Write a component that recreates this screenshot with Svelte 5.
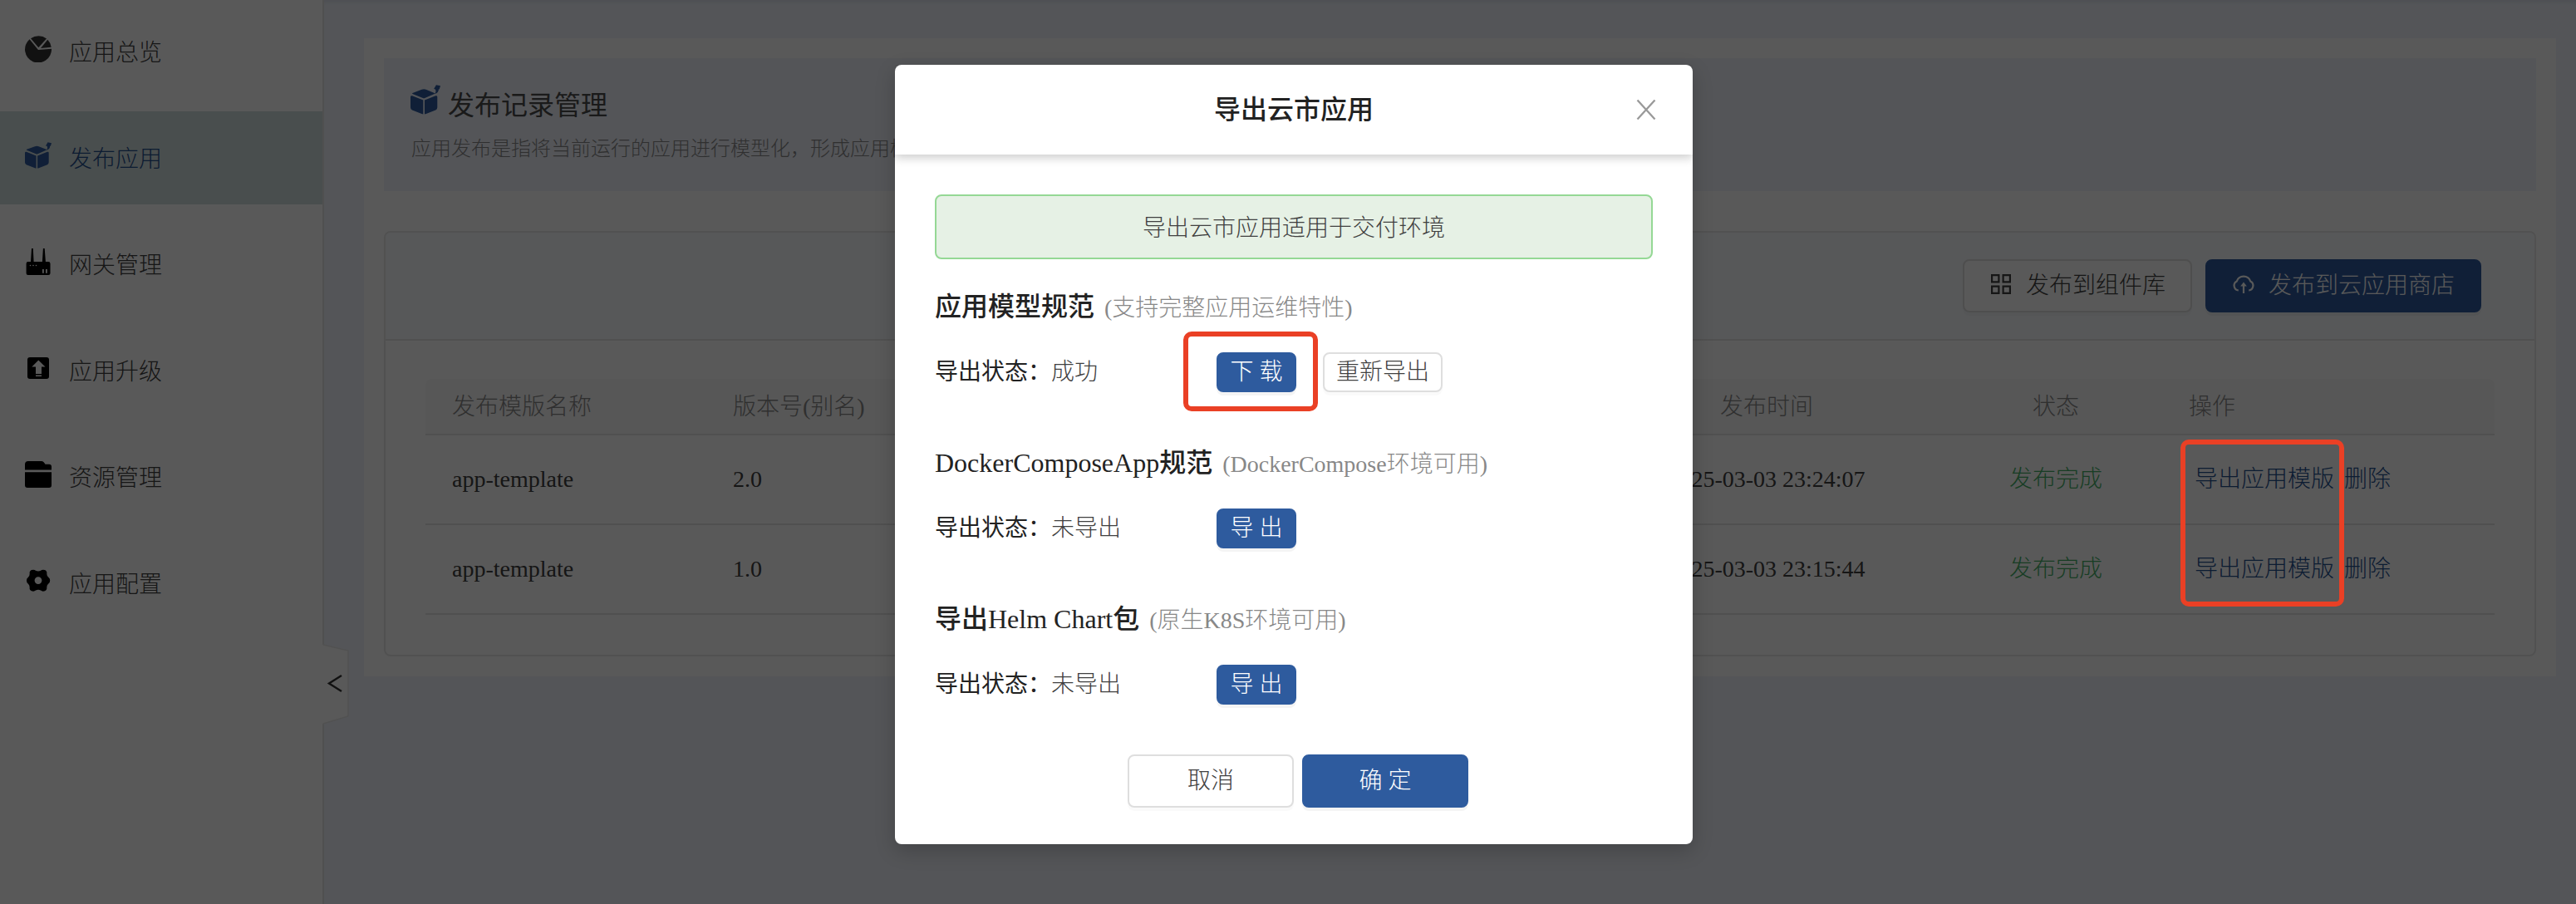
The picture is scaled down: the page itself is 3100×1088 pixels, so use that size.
<script>
  const menu = [
    { label: '应用总览', icon: 'pie' },
    { label: '发布应用', icon: 'box', active: true },
    { label: '网关管理', icon: 'router' },
    { label: '应用升级', icon: 'upgrade' },
    { label: '资源管理', icon: 'folder' },
    { label: '应用配置', icon: 'gear' },
  ];
  const rows = [
    { name: 'app-template', version: '2.0', time: '2025-03-03 23:24:07' },
    { name: 'app-template', version: '1.0', time: '2025-03-03 23:15:44' },
  ];
  const sections = [
    { title: '应用模型规范', note: '(支持完整应用运维特性)', status: '成功', primary: '下 载', again: '重新导出' },
    { title: 'DockerComposeApp规范', note: '(DockerCompose环境可用)', status: '未导出', primary: '导 出' },
    { title: '导出Helm Chart包', note: '(原生K8S环境可用)', status: '未导出', primary: '导 出' },
  ];
</script>

{#snippet box()}
  <svg class="icon" viewBox="0 0 32 32" fill="currentColor">
    <path d="M2.200 8.800 12 5.200q2.300-.9 4.600 0l9 3.600q.6.500 0 .9L15.400 14.200q-1.100.4-2.200 0L2.200 9.800q-.7-.5 0-1z" />
    <path d="M1.800 11.800 13.600 16.400V31.600q-.7 0-1.600-.4L1.800 27.200Q0 26.200 0 24.200V13q0-1.700 1.800-1.200z" />
    <path d="M26.900 11.800 15.100 16.400V31.600q.7 0 1.600-.4L26.900 27.200q1.800-1 1.800-3V13q0-1.700-1.800-1.200z" />
    <path d="M27.500.2 32 1.200 30.800 5 30.200 4.500q0 4.200-4.500 5.400Q28 7 26.500 4.800L25 4.400z" />
  </svg>
{/snippet}

<div class="app">
  <aside class="sidebar">
    {#each menu as item}
      <div class="item" class:active={item.active}>
        <span class="item-icon">
          {#if item.icon === 'pie'}
            <svg class="icon" viewBox="0 0 32 32" fill="#333">
              <path d="M5.600 4.300 16 17 32 15.700A16 16 0 1 1 5.600 4.300z" />
              <path d="M7 3.200A16 16 0 0 1 26 3.400L16.300 14.200z" />
              <path d="M27.300 4.800A16 16 0 0 1 31.700 13.800L19 15z" />
            </svg>
          {:else if item.icon === 'box'}
            {@render box()}
          {:else if item.icon === 'router'}
            <svg class="icon" viewBox="0 0 32 32">
              <path d="M8 0h1.800l.8 16H20.900L21.900 0h1.800l1.200 16h3.300q2.300 0 2.300 2.200V30q0 2-2.300 2H3.800q-2.200 0-2.200-2V18.200Q1.600 16 3.800 16H7z" />
              <g fill="#fff"><circle cx="6.500" cy="20.500" r=".8" /><circle cx="10" cy="20.500" r=".8" /><circle cx="13.500" cy="20.500" r=".8" /><path d="M21 25h1.800v4.800H21zM25 25h1.800v4.800H25z" /></g>
            </svg>
          {:else if item.icon === 'upgrade'}
            <svg class="icon" viewBox="0 0 32 32">
              <rect x="3" y="3" width="26" height="26" rx="3" />
              <path d="M16.300 6.500 24.500 14.500H20V23h-7v-8.500H8.300zM13 24.500h7v1.500h-7z" fill="#fff" />
            </svg>
          {:else if item.icon === 'folder'}
            <svg class="icon" viewBox="0 0 32 32">
              <path d="M0 10.500V4Q0 0 4 0H20q2.500 0 4.500 3.800H29q3 0 3 3v3.700zM0 13.200H32V29q0 3-3 3H3q-3 0-3-3z" />
            </svg>
          {:else}
            <svg class="icon" viewBox="0 0 32 32">
              <path fill-rule="evenodd" d="M8 3q3-1 5 .7 3 1.600 6 0 2-1.700 5-.7 3 1.500 2.300 4.500 0 3 2.200 4.500 1.800 1 1.700 3.500.1 2.500-1.700 3.700-2.200 1.500-2.200 4.600.5 3-2.300 4.500-3 1-5-.7-3-1.600-6 0-2 1.700-5 .7-3-1.500-2.300-4.500 0-3-2.200-4.600Q1.900 18 2 15.500 1.900 13 3.700 12 5.800 10.500 5.700 7.500 5 4.500 8 3zM16 11.200a4.400 4.400 0 1 0 0 8.800 4.400 4.400 0 0 0 0-8.800z" />
            </svg>
          {/if}
        </span>
        <span class="item-label">{item.label}</span>
      </div>
    {/each}
    <svg class="handle" viewBox="0 0 34 98">
      <path d="M0 1 31 8V87L0 96z" fill="#fff" />
      <path d="M1 1 31 8V87L1 96" fill="none" stroke="#e8e8e8" stroke-width="1.500" />
      <path d="M23 38 8 47.500 23 57" fill="none" stroke="#333" stroke-width="2.400" />
    </svg>
  </aside>

  <main class="main">
    <div class="content">
      <header class="banner">
        <div class="banner-title"><span class="banner-icon">{@render box()}</span><h1>发布记录管理</h1></div>
        <p>应用发布是指将当前运行的应用进行模型化，形成应用模版</p>
      </header>

      <section class="card">
        <div class="toolbar">
          <button class="btn large">
            <svg class="btn-icon" viewBox="0 0 28 28" fill="none" stroke="currentColor" stroke-width="2.200">
              <path d="M3.100 3.100h8.300v8.300H3.100zM16.600 3.100h8.300v8.300h-8.300zM3.100 16.600h8.300v8.300H3.100zM16.600 16.600h8.300v8.300h-8.300z" />
            </svg>
            <span>发布到组件库</span>
          </button>
          <button class="btn large primary">
            <svg class="btn-icon" viewBox="0 0 28 28" fill="none" stroke="currentColor" stroke-width="2.200">
              <path d="M7.800 21.500A5.900 5.900 0 0 1 5.800 10.400a8.700 8.700 0 0 1 16.400 0 5.900 5.900 0 0 1-2 11.100M14 25V14" />
              <path d="M14 11.500 17.800 16.500H10.200z" fill="currentColor" stroke="none" />
            </svg>
            <span>发布到云应用商店</span>
          </button>
        </div>
        <div class="table">
          <div class="row head">
            <span>发布模版名称</span><span>版本号(别名)</span><span class="center">发布时间</span><span class="center">状态</span><span>操作</span>
          </div>
          {#each rows as row}
            <div class="row">
              <span>{row.name}</span><span>{row.version}</span><span class="center">{row.time}</span>
              <span class="center done">发布完成</span>
              <span class="links"><a href="#export">导出应用模版</a><a href="#delete">删除</a></span>
            </div>
          {/each}
        </div>
      </section>
    </div>
  </main>
</div>

<div class="mask">
  <div class="modal">
    <div class="modal-head">
      <h2>导出云市应用</h2>
      <svg class="close" viewBox="0 0 24 26" fill="none" stroke="#999" stroke-width="2.300"><path d="M1.500 1.500 22.500 24.500M22.500 1.500 1.500 24.500" /></svg>
    </div>
    <div class="modal-body">
      <div class="alert">导出云市应用适用于交付环境</div>
      {#each sections as s}
        <div class="section">
          <div class="section-title"><strong>{s.title}</strong><span>{s.note}</span></div>
          <div class="section-row">
            <div class="status"><span class="label">导出状态：</span>{s.status}</div>
            <div class="actions">
              <button class="btn small primary">{s.primary}</button>
              {#if s.again}<button class="btn small">{s.again}</button>{/if}
            </div>
          </div>
        </div>
      {/each}
      <div class="footer">
        <button class="btn wide">取消</button>
        <button class="btn wide primary">确 定</button>
      </div>
    </div>
  </div>
</div>

<div class="mark mark-download"></div>
<div class="mark mark-links"></div>

<style>
  :global(body) { margin: 0; overflow: hidden; }
  .app, .mask, .app *, .mask *, .mark { box-sizing: border-box; }
  .app, .mask { font-family: 'Liberation Serif', 'Noto Sans CJK SC', serif; font-size: 28px; font-weight: 300; line-height: 42px; color: #404040; }
  .app { display: flex; width: 3100px; height: 1088px; background: #f0f4fd; overflow: hidden; }
  .icon { display: block; width: 100%; height: 100%; }
  .sidebar { position: relative; flex: none; width: 390px; border-right: 2px solid #e6e6e6; background: #fff; padding-top: 6px; display: flex; flex-direction: column; gap: 16px; }
  .item { height: 112px; display: flex; align-items: center; gap: 21px; padding-left: 30px; white-space: nowrap; }
  .item.active { background: #d2dede; color: #24508f; }
  .item-label { padding-top: 4px; }
  .item-icon { width: 32px; height: 32px; margin-bottom: 6px; color: #2e5b9e; }
  .handle { position: absolute; left: 388px; top: 775px; width: 34px; height: 98px; }
  .main { flex: 1; padding: 46px 24px 0 48px; box-shadow: inset 0 5px 4px -2px rgba(0, 21, 41, .07); }
  .content { height: 768px; padding: 24px; background: #fff; }
  .banner { height: 160px; padding: 32px; background: #f0f4fd; }
  .banner-title { display: flex; align-items: center; gap: 9px; height: 48px; color: #2e5b9e; }
  .banner-icon { width: 36px; height: 36px; margin-bottom: 12px; }
  h1, h2, p { margin: 0; }
  h1 { padding-top: 2px; font-size: 32px; line-height: 48px; font-weight: 400; color: #4a4a4a; }
  .banner p { margin-top: 11px; padding-left: 1px; font-size: 24px; line-height: 36px; color: #888; white-space: nowrap; }
  .card { margin-top: 48px; height: 512px; border: 2px solid #e8e8e8; border-radius: 8px; overflow: hidden; }
  .toolbar { height: 130px; padding: 0 64px 0 0; display: flex; justify-content: flex-end; align-items: center; gap: 16px; background: #f8fbff; border-bottom: 2px solid #e4e4e4; }
  .btn { display: flex; align-items: center; justify-content: center; padding: 0; border: 2px solid #dedede; border-radius: 8px; background: #fff; color: #404040; font: inherit; white-space: nowrap; box-shadow: 0 4px 0 rgba(0, 0, 0, .018); }
  .btn.primary { background: #2e5b9e; border-color: #2e5b9e; color: #fff; box-shadow: 0 4px 0 rgba(0, 0, 0, .045); }
  .large { height: 64px; padding: 0 30px; gap: 16px; }
  .btn-icon { width: 28px; height: 28px; margin-bottom: 4px; }
  .table { margin: 46px 48px 0; }
  .row { display: grid; grid-template-columns: 338px 1026px 436px 290px 1fr; height: 108px; align-items: center; border-bottom: 2px solid #e6e6e6; padding-left: 32px; white-space: nowrap; }
  .head { height: 68px; background: #f8f8f8; color: #888; border-radius: 8px 8px 0 0; }
  .head > span { padding-top: 2px; }
  .center { text-align: center; }
  .row > .center:nth-child(4) { padding-right: 30px; }
  .done { color: #45b068; }
  .links { display: flex; gap: 12px; padding-left: 7px; }
  .links a { color: #24508f; text-decoration: none; }
  .mask { position: absolute; inset: 0; width: 3100px; height: 1088px; background: rgba(0, 0, 0, .65); padding: 78px 0 0 1077px; overflow: hidden; }
  .modal { width: 960px; height: 938px; border-radius: 8px; background: #fff; box-shadow: 0 8px 24px rgba(0, 0, 0, .2); }
  .modal-head { position: relative; height: 108px; display: flex; align-items: center; justify-content: center; box-shadow: 0 4px 12px rgba(0, 0, 0, .2); border-radius: 8px 8px 0 0; clip-path: inset(0 0 -20px 0); }
  h2 { font-size: 32px; line-height: 48px; font-weight: 500; color: #222; }
  .close { position: absolute; right: 44px; top: 41px; width: 24px; height: 26px; }
  .modal-body { padding: 48px 48px 0; }
  .alert { height: 78px; padding-top: 3px; display: flex; align-items: center; justify-content: center; border: 2px solid #95d895; border-radius: 8px; background: #e6f1e5; }
  .section { height: 188px; padding-top: 33px; }
  .section-title { height: 48px; line-height: 48px; display: flex; align-items: baseline; gap: 12px; white-space: nowrap; }
  .section-title strong { font-size: 32px; font-weight: 500; color: #222; }
  .section-title span { color: #888; }
  .section-row { display: flex; align-items: center; margin-top: 31px; height: 48px; }
  .status { width: 339px; white-space: nowrap; }
  .label { color: #222; font-weight: 400; }
  .actions { display: flex; gap: 32px; }
  .small { height: 48px; padding: 0 14px; line-height: 44px; }
  .small.primary { width: 96px; }
  .footer { display: flex; justify-content: center; gap: 10px; padding: 32px 0 0 10px; }
  .wide { width: 200px; height: 64px; }
  .mark { position: absolute; border: 6px solid #ea4025; border-radius: 10px; }
  .mark-download { left: 1424px; top: 399px; width: 162px; height: 96px; }
  .mark-links { left: 2624px; top: 529px; width: 197px; height: 201px; }
</style>
